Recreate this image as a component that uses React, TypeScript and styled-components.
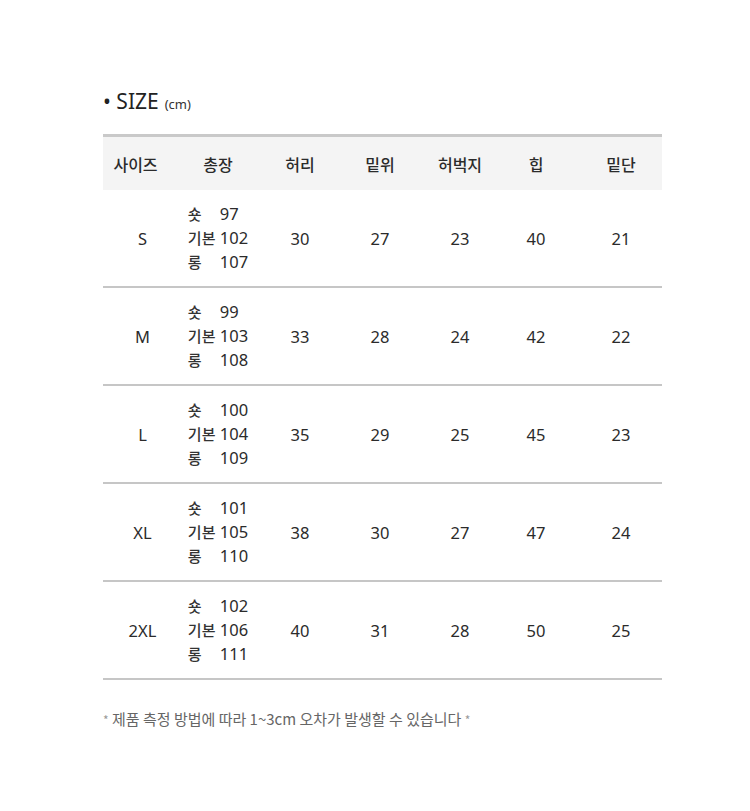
import React from 'react';
import styled, {createGlobalStyle} from 'styled-components';

const GlobalStyle = createGlobalStyle`
  html, body {
    margin: 0;
    padding: 0;
    background: #fff;
  }
  body {
    font-family: "Noto Sans", "Noto Sans CJK KR", sans-serif;
    color: #2b2b2b;
  }
`;

const Page = styled.div`
  width: 750px;
  min-height: 811px;
  padding: 87px 88px 0 103px;
  box-sizing: border-box;
`;

const Title = styled.h2`
  margin: 0 0 16px 0;
  font-size: 21px;
  font-weight: 400;
  line-height: 28px;
  color: #222;
  display: flex;
  align-items: baseline;
  gap: 6px;
`;

const Unit = styled.span`
  font-size: 13px;
  color: #333;
`;

const cols = '65px 100px 64px 96px 64px 88px 82px';

const Table = styled.div`
  width: 559px;
  border-top: 3px solid #c9c9c9;
`;

const HeadRow = styled.div`
  display: grid;
  grid-template-columns: ${cols};
  height: 53px;
  align-items: center;
  background: #f4f4f4;
`;

const HeadCell = styled.div`
  text-align: center;
  font-family: "Noto Sans CJK KR", sans-serif;
  font-size: 16px;
  font-weight: 500;
  color: #2b2b2b;
`;

const BodyRow = styled.div`
  display: grid;
  grid-template-columns: ${cols};
  height: 96px;
  align-items: center;
  border-bottom: 2px solid #c6c6c6;
`;

const Cell = styled.div<{ $shift?: number }>`
  text-align: center;
  font-size: 16.5px;
  color: #2b2b2b;
  transform: translateX(${p => p.$shift || 0}px);
`;

const Lengths = styled.div`
  display: grid;
  grid-template-columns: 32px auto;
  justify-content: center;
  line-height: 24px;
  font-size: 16.5px;
  color: #2b2b2b;
`;

const LenLabel = styled.span`
  font-family: "Noto Sans CJK KR", sans-serif;
  font-size: 15px;
  font-weight: 500;
  color: #333;
`;

const LenValue = styled.span`
  text-align: left;
`;

const Note = styled.p`
  margin: 28px 0 0 0;
  font-family: "Noto Sans CJK KR", sans-serif;
  font-size: 15px;
  color: #666;
`;

const Star = styled.span`
  color: #999;
  font-size: 12px;
`;

const heads = ['사이즈', '총장', '허리', '밑위', '허벅지', '힙', '밑단'];

const rows = [
  {size: 'S', len: [97, 102, 107], vals: [30, 27, 23, 40, 21]},
  {size: 'M', len: [99, 103, 108], vals: [33, 28, 24, 42, 22]},
  {size: 'L', len: [100, 104, 109], vals: [35, 29, 25, 45, 23]},
  {size: 'XL', len: [101, 105, 110], vals: [38, 30, 27, 47, 24]},
  {size: '2XL', len: [102, 106, 111], vals: [40, 31, 28, 50, 25]},
];

const lenLabels = ['숏', '기본', '롱'];

export default function App() {
  return (
    <Page>
      <GlobalStyle/>
      <Title>• SIZE <Unit>(cm)</Unit></Title>
      <Table>
        <HeadRow>
          {heads.map(h => (
            <HeadCell key={h}>{h}</HeadCell>
          ))}
        </HeadRow>
        {rows.map(r => (
          <BodyRow key={r.size}>
            <Cell $shift={7}>{r.size}</Cell>
            <Lengths>
              {r.len.map((n, i) => (
                <React.Fragment key={i}>
                  <LenLabel>{lenLabels[i]}</LenLabel>
                  <LenValue>{n}</LenValue>
                </React.Fragment>
              ))}
            </Lengths>
            {r.vals.map((v, i) => (
              <Cell key={i}>{v}</Cell>
            ))}
          </BodyRow>
        ))}
      </Table>
      <Note><Star>*</Star> 제품 측정 방법에 따라 1~3cm 오차가 발생할 수 있습니다 <Star>*</Star></Note>
    </Page>
  );
}
